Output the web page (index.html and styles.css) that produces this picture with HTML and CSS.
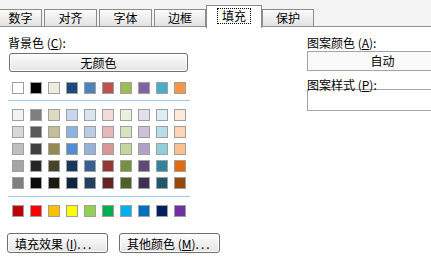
FILE: index.html
```html
<!DOCTYPE html>
<html lang="zh-CN">
<head>
    <meta charset="UTF-8">
    <title>设置单元格格式 - 填充</title>
    <link rel="stylesheet" href="styles.css">
</head>
<body>
    <!-- Tabs -->
    <div class="tabs">
        <div class="tab tab-num">数字</div>
        <div class="tab tab-align">对齐</div>
        <div class="tab tab-font">字体</div>
        <div class="tab tab-border">边框</div>
        <div class="tab tab-fill active"><span class="focus">填充</span></div>
        <div class="tab tab-protect">保护</div>
    </div>

    <!-- Fill panel -->
    <div class="panel">
        <div class="left">
            <div class="label">背景色 (<u>C</u>):</div>
            <button class="btn btn-none">无颜色</button>

            <div class="swatches row-theme" id="theme-row"></div>
            <div class="divider"></div>
            <div class="shades" id="shades"></div>
            <div class="divider divider-2"></div>
            <div class="swatches row-standard" id="standard-row"></div>

            <div class="actions">
                <button class="btn btn-action">填充效果 (<u>I</u>)<span class="dots">...</span></button>
                <button class="btn btn-action">其他颜色 (<u>M</u>)<span class="dots">...</span></button>
            </div>
        </div>

        <div class="right">
            <div class="label">图案颜色 (<u>A</u>):</div>
            <div class="select">自动</div>
            <div class="label label-2">图案样式 (<u>P</u>):</div>
            <div class="select select-2"></div>
        </div>
    </div>

    <script>
        const theme = ['#ffffff', '#000000', '#eeece1', '#1f497d', '#4f81bd', '#c0504d', '#9bbb59', '#8064a2', '#4bacc6', '#f79646'];
        const shades = [
            ['#f2f2f2', '#7f7f7f', '#ddd9c3', '#c6d9f0', '#dbe5f1', '#f2dcdb', '#ebf1dd', '#e5e0ec', '#dbeef3', '#fdeada'],
            ['#d8d8d8', '#595959', '#c4bd97', '#8db3e2', '#b8cce4', '#e5b9b7', '#d7e3bc', '#ccc1d9', '#b7dde8', '#fbd5b5'],
            ['#bfbfbf', '#3f3f3f', '#938953', '#548dd4', '#95b3d7', '#d99694', '#c3d69b', '#b2a2c7', '#92cddc', '#fac08f'],
            ['#a5a5a5', '#262626', '#494429', '#17365d', '#366092', '#953734', '#76923c', '#5f497a', '#31859b', '#e36c09'],
            ['#7f7f7f', '#0c0c0c', '#1d1b10', '#0f243e', '#244061', '#632423', '#4f6128', '#3f3151', '#205867', '#974806']
        ];
        const standard = ['#c00000', '#ff0000', '#ffc000', '#ffff00', '#92d050', '#00b050', '#00b0f0', '#0070c0', '#002060', '#7030a0'];

        function fillRow(el, colors) {
            colors.forEach(c => {
                const s = document.createElement('span');
                s.className = 'swatch';
                s.style.background = c;
                el.appendChild(s);
            });
        }

        fillRow(document.getElementById('theme-row'), theme);
        fillRow(document.getElementById('standard-row'), standard);

        const shadeBox = document.getElementById('shades');
        shades.forEach(row => {
            const r = document.createElement('div');
            r.className = 'swatches';
            fillRow(r, row);
            shadeBox.appendChild(r);
        });
    </script>
</body>
</html>
```

FILE: styles.css
```css
/* Global */
body {
    margin: 0;
    padding: 0;
    width: 431px;
    height: 279px;
    overflow: hidden;
    background: #ffffff;
    color: #000;
    font-family: "Noto Sans CJK SC", "Liberation Sans", sans-serif;
    font-size: 12px;
}

u {
    text-decoration: underline;
}

/* Tabs */
.tabs {
    display: flex;
    align-items: flex-end;
    height: 26px;
    background: #f3f3f3;
    border-bottom: 1px solid #8f9090;
}

.tab {
    box-sizing: border-box;
    height: 17px;
    line-height: 15px;
    margin-right: 2px;
    text-align: center;
    border: 1px solid #8c8c8c;
    border-bottom: none;
    background: linear-gradient(#fbfbfb, #e2e2e2);
}

.tab-num { width: 43px; margin-left: -1px; }
.tab-align { width: 53px; }
.tab-font { width: 53px; }
.tab-border { width: 52px; margin-right: 0; }
.tab-protect { width: 52px; }

.tab.active {
    width: 56px;
    height: 23px;
    margin-bottom: -2px;
    margin-right: 0;
    padding-top: 2px;
    background: #ffffff;
    position: relative;
}

.focus {
    display: inline-block;
    padding: 0 4px;
    line-height: 14px;
    border: 1px dotted #000;
}

/* Panel */
.panel {
    display: flex;
    padding: 9px 0 0 8px;
}

.left {
    width: 182px;
}

.right {
    margin-left: 117px;
    width: 124px;
}

.label {
    height: 14px;
    line-height: 14px;
    white-space: nowrap;
}

.btn {
    box-sizing: border-box;
    font-family: inherit;
    font-size: 12px;
    color: #000;
    padding: 0;
    border: 1px solid #707070;
    border-radius: 3px;
    background: linear-gradient(#fdfdfd, #e4e4e4);
    box-shadow: inset 0 0 0 1px #ffffff;
}

.btn-none {
    display: block;
    width: 179px;
    height: 19px;
    line-height: 16px;
    margin: 3px 0 0 1px;
}

/* Swatches */
.swatches {
    display: flex;
    gap: 6px;
    padding-left: 4px;
}

.swatch {
    box-sizing: border-box;
    width: 12px;
    height: 12px;
    border: 1px solid #a0a0a0;
}

.row-theme {
    margin-top: 10px;
}

.divider {
    width: 182px;
    height: 1px;
    margin-top: 6px;
    background: #a9c6e2;
}

.divider-2 {
    margin-top: 7px;
}

.shades {
    display: flex;
    flex-direction: column;
    gap: 5px;
    margin-top: 8px;
}

.row-standard {
    margin-top: 8px;
}

.actions {
    display: flex;
    gap: 11px;
    width: 213px;
    margin: 16px 0 0 -1px;
}

.btn-action {
    flex: none;
    width: 101px;
    height: 20px;
    line-height: 17px;
    text-align: left;
    padding-left: 7px;
    white-space: nowrap;
}

.dots {
    letter-spacing: 2px;
}

/* Pattern column */
.select {
    box-sizing: border-box;
    width: 124px;
    height: 20px;
    margin-top: 1px;
    padding-left: 26px;
    line-height: 18px;
    text-align: center;
    border: 1px solid #a5a5a5;
    border-right: none;
    background: #fafafa;
}

.label-2 {
    margin-top: 7px;
}

.select-2 {
    height: 22px;
    margin-top: -3px;
    background: #ffffff;
}
```
